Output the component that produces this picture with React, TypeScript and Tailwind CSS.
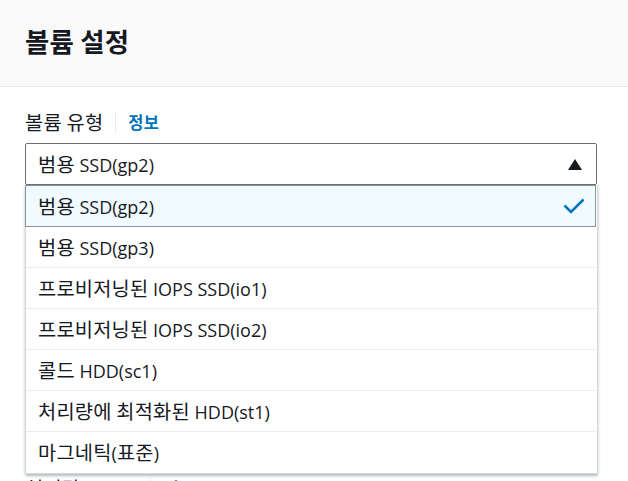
import { useState } from "react";

const FONT = "font-['Open_Sans','Noto_Sans_CJK_KR',sans-serif]";

const VOLUME_TYPES = [
  "범용 SSD(gp2)",
  "범용 SSD(gp3)",
  "프로비저닝된 IOPS SSD(io1)",
  "프로비저닝된 IOPS SSD(io2)",
  "콜드 HDD(sc1)",
  "처리량에 최적화된 HDD(st1)",
  "마그네틱(표준)",
];

// Hangul is set a touch larger so it keeps the width of the original face
function T({ children }: { children: string }) {
  const parts = children.split(/([\uac00-\ud7a3]+)/);
  return (
    <>
      {parts.map((p, i) =>
        i % 2 === 1 ? (
          <span key={i} className="text-[1.1em] tracking-[0.01em] font-['Noto_Sans_CJK_KR',sans-serif]">
            {p}
          </span>
        ) : (
          p
        )
      )}
    </>
  );
}

function FieldLabel({ text }: { text: string }) {
  return (
    <div className="flex items-center h-6">
      <span className="text-[18px] leading-6 text-[#16191f]">
        <T>{text}</T>
      </span>
      <span className="ml-[12px] mr-[12px] w-px h-[22px] bg-[#eaeded]" />
      <span className="text-[15px] leading-6 font-bold text-[#0073bb]">
        <T>정보</T>
      </span>
    </div>
  );
}

function CheckIcon() {
  return (
    <svg width="22" height="16" viewBox="0 0 22 16" fill="none">
      <path d="M1.5 7.5l6.5 6.5L20.5 1.5" stroke="#0073bb" strokeWidth="2.5" />
    </svg>
  );
}

export default function App() {
  const [selected, setSelected] = useState(0);

  return (
    <div className={`${FONT} w-[628px] h-[481px] overflow-hidden bg-white text-[#16191f]`}>
      {/* Header */}
      <div className="h-[87px] bg-[#fafafa] border-b border-[#eaeded] flex items-center px-[25px]">
        <h2 className="text-[24px] font-bold leading-[30px] pb-[2px]">
          <T>볼륨 설정</T>
        </h2>
      </div>

      <div className="pl-[25px] pr-[31px] pt-[23px]">
        {/* Volume type */}
        <FieldLabel text="볼륨 유형" />
        <div className="relative mt-[9px]">
          <div className="h-[42px] border border-[#687078] rounded-[2px] flex items-center pl-[12px] pr-[14px]">
            <span className="flex-1 text-[18px] leading-6">
              <T>{VOLUME_TYPES[selected]}</T>
            </span>
            <svg width="14" height="11" viewBox="0 0 14 11">
              <path d="M7 0L14 11H0z" fill="#16191f" />
            </svg>
          </div>

          {/* Dropdown */}
          <div className="absolute z-10 left-0 right-[-1px] top-full bg-white border-x border-b border-[#d5dbdb] shadow-[0_2px_3px_rgba(0,28,36,0.3)] rounded-b-[2px]">
            {VOLUME_TYPES.map((t, i) => (
              <button
                key={t}
                onClick={() => setSelected(i)}
                className={
                  i === selected
                    ? "w-full h-[42px] flex items-center pl-[12px] pr-[10px] bg-[#f1faff] border border-[#879596] -mx-px text-left"
                    : "w-full h-[41px] flex items-center pl-[12px] pr-[10px] border-b border-[#eaeded] last:border-b-0 text-left"
                }
              >
                <span className="flex-1 text-[18px] leading-6">
                  <T>{t}</T>
                </span>
                {i === selected && <CheckIcon />}
              </button>
            ))}
          </div>
        </div>

        {/* Fields hidden under the open list */}
        <div className="mt-[30px]">
          <FieldLabel text="크기(GiB)" />
          <div className="mt-[8px] h-[42px] border border-[#aab7b8] rounded-[2px]" />
          <p className="mt-[4px] text-[14px] text-[#687078]">최소: 1GiB, 최대: 16384GiB.</p>
        </div>
        <div className="mt-[30px]">
          <FieldLabel text="IOPS" />
          <div className="mt-[8px] h-[42px] border border-[#aab7b8] rounded-[2px]" />
          <p className="mt-[4px] text-[14px] text-[#687078]">기준 IOPS 100</p>
        </div>
        <div className="mt-[33px]">
          <FieldLabel text="처리량(MiB/s)" />
        </div>
      </div>
    </div>
  );
}
